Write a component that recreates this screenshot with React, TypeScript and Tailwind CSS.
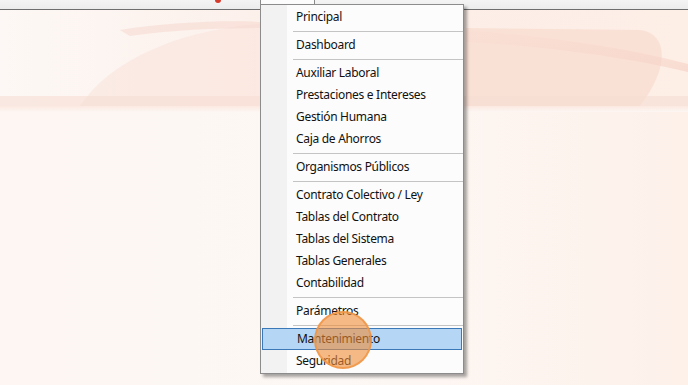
import React from "react"

type Entry = { label: string; sepAfter?: boolean; active?: boolean }

const items: Entry[] = [
  { label: "Principal", sepAfter: true },
  { label: "Dashboard", sepAfter: true },
  { label: "Auxiliar Laboral" },
  { label: "Prestaciones e Intereses" },
  { label: "Gestión Humana" },
  { label: "Caja de Ahorros", sepAfter: true },
  { label: "Organismos Públicos", sepAfter: true },
  { label: "Contrato Colectivo / Ley" },
  { label: "Tablas del Contrato" },
  { label: "Tablas del Sistema" },
  { label: "Tablas Generales" },
  { label: "Contabilidad", sepAfter: true },
  { label: "Parámetros", sepAfter: true },
  { label: "Mantenimiento", active: true },
  { label: "Seguridad" },
]

const Banner = () => (
  <svg width="688" height="96" viewBox="0 0 688 96" className="block">
    <defs>
      <linearGradient id="bg" x1="0" y1="0" x2="1" y2="0">
        <stop offset="0" stopColor="#fdf8f5" />
        <stop offset="0.45" stopColor="#fcefe9" />
        <stop offset="1" stopColor="#fdeee6" />
      </linearGradient>
      <linearGradient id="sw" x1="0" y1="0" x2="1" y2="1">
        <stop offset="0" stopColor="#f8d8cf" stopOpacity="0.2" />
        <stop offset="1" stopColor="#f5cfc2" stopOpacity="0.6" />
      </linearGradient>
    </defs>
    <rect width="688" height="96" fill="url(#bg)" />
    <path d="M80 96 C110 50 180 20 260 14 L260 96 Z" fill="#f9e2da" opacity="0.55" />
    <path d="M120 20 C170 12 230 10 260 12 L260 18 C220 18 170 20 130 26 Z" fill="#f6d6cc" opacity="0.5" />
    <path d="M466 18 L640 20 C670 24 668 60 640 96 L466 96 Z" fill="#f9ddd1" opacity="0.8" />
    <path d="M466 20 C540 26 620 36 688 54 L688 62 C620 46 540 36 466 32 Z" fill="url(#sw)" />
    <rect y="86" width="688" height="10" fill="#f6ddd3" opacity="0.6" />
  </svg>
)

const App = () => {
  return (
    <div
      className="relative w-[688px] h-[385px] overflow-hidden bg-gradient-to-r from-[#fdf6f2] via-[#fdf8f5] to-[#fdf1ea]"
      style={{ fontFamily: '"Noto Sans", "Open Sans", sans-serif' }}
    >
      {/* top menu strip */}
      <div className="h-[9px] bg-gradient-to-b from-[#f4f4f4] to-[#ececec] relative">
        <div className="absolute left-[215px] top-0 w-[6px] h-[3px] bg-[#d63a2a] rounded-b-sm" />
      </div>
      <div className="h-px bg-[#6e6e6e]" />
      <Banner />
      <div className="h-[6px] bg-gradient-to-b from-[#fbe9e1] to-[#fdf6f2]" />

      {/* open menu tab */}
      <div className="absolute left-[260px] top-0 w-[55px] h-[6px] bg-[#fcfcfc] border-l border-r border-[#8a8a8a]" />

      {/* dropdown */}
      <div className="absolute left-[260px] top-[4px] w-[204px] bg-[#fcfcfc] border border-[#8c8c8c] shadow-[3px_3px_3px_rgba(0,0,0,0.35)] py-px">
        <div className="absolute left-0 top-0 bottom-0 w-[26px] bg-[#f2f2f2]" />
        <div className="absolute left-[56px] -top-px w-[146px] h-px bg-[#8c8c8c]" />
        <div className="relative">
          {items.map((it) => (
            <div key={it.label}>
              <div
                className={
                  it.active
                    ? "h-[22px] mx-px flex items-center pl-[34px] text-[12px] tracking-[-0.3px] text-[#111] bg-[#b5d6f4] border border-[#3a78b8]"
                    : "h-[22px] flex items-center pl-[35px] text-[12px] tracking-[-0.3px] text-[#111]"
                }
              >
                {it.label}
              </div>
              {it.sepAfter && (
                <div className="h-[6px] flex items-center pl-[32px]">
                  <div className="h-px w-full bg-[#c4c4c4]" />
                </div>
              )}
            </div>
          ))}
        </div>
      </div>

      {/* click indicator */}
      <div className="absolute left-[314px] top-[311px] w-[58px] h-[58px] rounded-full bg-[rgba(240,140,55,0.6)] border-2 border-[rgba(240,150,70,0.85)]" />
    </div>
  )
}

export default App
